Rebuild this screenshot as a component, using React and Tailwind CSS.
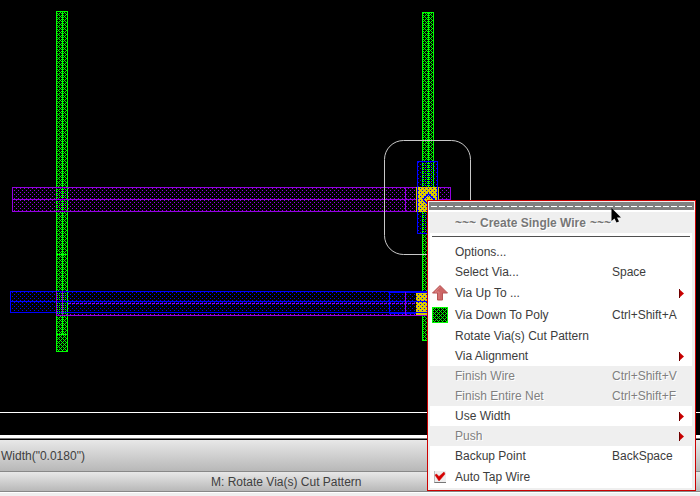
import React from "react";

// Lit columns of each of the four rows in a repeating 4 by 4 cell.
const METAL_CELL = [[0], [], [2], []];
const POLY_CELL = [[0], [1, 3], [2], [1, 3]];

function Stipple({ x, y, w, h, color, cell = METAL_CELL }) {
  let d = "";
  for (let py = y; py < y + h; py += 1) {
    for (let px = x; px < x + w; px += 1) {
      if (cell[py % 4].includes(px % 4)) d += `M${px} ${py}h1v1h-1z`;
    }
  }
  return <path d={d} fill={color} />;
}

function Shape({ x, y, w, h, color, cell }) {
  return (
    <g>
      <Stipple x={x + 1} y={y + 1} w={w - 2} h={h - 2} color={color} cell={cell} />
      <rect x={x + 0.5} y={y + 0.5} width={w - 1} height={h - 1} fill="none" stroke={color} />
    </g>
  );
}

const GREEN = "#00ff00";
const VIOLET = "#9400e0";
const BLUE = "#0000ff";
const YELLOW = "#dccc00";

function Layout() {
  return (
    <svg className="absolute inset-0 h-full w-full" aria-hidden="true">
      <Shape x={56} y={11} w={12} h={341} color={GREEN} cell={POLY_CELL} />
      <Shape x={422} y={12} w={12} h={329} color={GREEN} cell={POLY_CELL} />
      <path d="M62.5 11v323M428.5 12v328M56 254.5h12M56 334.5h12" fill="none" stroke={GREEN} />

      <Shape x={12} y={187} w={439} h={25} color={VIOLET} />
      <path d="M12 199.5h438M405.5 187v25" fill="none" stroke={VIOLET} />
      <Shape x={56} y={291} w={401} h={25} color={VIOLET} />

      <Shape x={10} y={291} w={441} h={22} color={BLUE} />
      <path d="M10 301.5h440M389.5 292v21M10 312.5h440" fill="none" stroke={BLUE} />
      <path d="M389 292h60M389 313h60" fill="none" stroke={BLUE} strokeWidth="2" />
      <path d="M56.5 291v24M62.5 291v24M405.5 292v23" fill="none" stroke={VIOLET} />
      <path d="M68 303.5h380" fill="none" stroke={VIOLET} strokeDasharray="3 1" />
      <Shape x={417} y={161} w={21} h={73} color={BLUE} />

      <path d="M416 187h23v25h-23zM416 293h23v22h-23z" fill={YELLOW} />
      <Stipple x={418} y={188} w={19} h={23} color={BLUE} />
      <Stipple x={416} y={294} w={22} h={18} color={BLUE} />
      <path d="M417.5 187v25M437.5 187v25M416 301.5h20M416 312.5h20" fill="none" stroke={BLUE} />
      <path d="M423 199.5l5.500-5.500 9 9M423 199.5l6 6" fill="none" stroke={BLUE} shapeRendering="crispEdges" />

      <rect x="384.5" y="140.5" width="86" height="114" rx="19" fill="none" stroke="#c8c8c8" />
      <path d="M0 412h4000v1h-4000z" fill="#fff" />
    </svg>
  );
}

function UpArrow() {
  return (
    <svg width="16" height="16" viewBox="0 0 16 16" aria-hidden="true">
      <path d="M8 .5L15.5 8H10.500v7h-5V8H.5z" fill="#cd6666" stroke="#b85454" />
      <path d="M8 2L3 7h4v7" fill="none" stroke="#d98585" />
    </svg>
  );
}

function PolySwatch() {
  return (
    <svg width="16" height="16" viewBox="0 0 16 16" aria-hidden="true">
      <path d="M0 0h16v16H0z" fill="#000" />
      <Shape x={0} y={0} w={16} h={16} color={GREEN} cell={POLY_CELL} />
    </svg>
  );
}

function CheckMark() {
  return (
    <svg className="pointer-events-none absolute inset-0" width="12" height="12" viewBox="0 0 12 12" aria-hidden="true">
      <path d="M1 4l1.500-1 2.500 2.500L10 1l1 2-6 7z" fill="#d40000" stroke="#d40000" strokeWidth=".5" />
    </svg>
  );
}

function SubmenuArrow() {
  return (
    <svg width="5" height="9" viewBox="0 0 5 9" aria-hidden="true">
      <path d="M0 0l5 4.500-5 4.500z" fill="#c80000" />
      <path d="M.5 0v9" stroke="#700000" />
    </svg>
  );
}

function Item({ label, shortcut, icon, submenu, disabled, tall }) {
  return (
    <button
      type="button"
      role="menuitem"
      disabled={disabled}
      className={`flex w-full items-center text-left ${tall ? "h-[22px]" : "h-5"} ${disabled ? "bg-[#efefef] text-[#808080] [text-shadow:1px_1px_0_#fff]" : "bg-white text-[#3c3c3c]"}`}
    >
      <span className="flex w-[25px] shrink-0 pl-[2px]">{icon}</span>
      <span className="flex-1 whitespace-nowrap">{label}</span>
      {shortcut && <span className="w-20 whitespace-nowrap">{shortcut}</span>}
      {submenu && <span className="pr-2"><SubmenuArrow /></span>}
    </button>
  );
}

function ContextMenu() {
  return (
    <div role="menu" aria-label="Create Single Wire" className="absolute top-[200px] left-[427px] w-[269px] border border-[#cc0000] bg-[#efefef] pt-px pb-[2px]">
      <div className="mx-px flex h-2 items-center bg-[#808080] px-[2px]">
        <div className="h-px w-full bg-[repeating-linear-gradient(90deg,#fff_0_6px,#808080_6px_8px)]" />
      </div>
      <div className="h-[2px] bg-white" />
      <div className="flex h-[21px] items-center gap-1 pl-[27px] font-bold whitespace-nowrap text-[#777] [text-shadow:1px_1px_0_#fff]">
        <span>~~~</span>
        <span>Create Single Wire</span>
        <span>~~~</span>
      </div>
      <div className="pr-[3px] pl-[2px]">
        <div className="flex h-[9px] items-start bg-white px-[2px] pt-[3px]">
          <div className="h-px w-full bg-[#505050]" />
        </div>
        <Item label="Options..." />
        <Item label="Select Via..." shortcut="Space" />
        <Item label="Via Up To ..." icon={<UpArrow />} submenu tall />
        <Item label="Via Down To Poly" icon={<PolySwatch />} shortcut="Ctrl+Shift+A" tall />
        <Item label="Rotate Via(s) Cut Pattern" />
        <Item label="Via Alignment" submenu />
        <Item label="Finish Wire" shortcut="Ctrl+Shift+V" disabled />
        <Item label="Finish Entire Net" shortcut="Ctrl+Shift+F" disabled />
        <Item label="Use Width" submenu />
        <Item label="Push" submenu disabled />
        <Item label="Backup Point" shortcut="BackSpace" />
        <label className="flex h-[22px] items-center bg-white text-[#3c3c3c]">
          <span className="flex w-[25px] shrink-0 pl-1">
            <span className="relative h-3 w-3">
              <input type="checkbox" defaultChecked className="block h-3 w-3 appearance-none border-b border-l border-b-[#777] border-l-[#bbb] bg-[#eee]" />
              <CheckMark />
            </span>
          </span>
          <span>Auto Tap Wire</span>
        </label>
      </div>
    </div>
  );
}

function Pointer() {
  return (
    <svg className="absolute top-[207px] left-[611px]" width="11" height="18" viewBox="0 0 11 18" aria-hidden="true">
      <path d="M.5 1v13l3-2.500 2 4 2.500-1-2-4h4z" fill="#000" />
    </svg>
  );
}

export default function App() {
  return (
    <div className="relative flex min-h-screen flex-col overflow-hidden bg-black font-['Liberation_Sans',Arial,sans-serif] text-[12px] leading-4 text-[#404040]">
      <main className="relative flex-1">
        <Layout />
      </main>
      <footer>
        <div className="h-[3px] bg-white" />
        <div className="h-px bg-[#777]" />
        <div className="h-px bg-black" />
        <div className="flex h-8 items-center border-b border-[#888] bg-linear-to-b from-[#e8e8e8] to-[#b8b8b8] pl-px">
          Width("0.0180")
        </div>
        <div className="flex h-5 items-center border-b border-[#888] bg-linear-to-b from-[#e8e8e8] to-[#b8b8b8] pl-[211px]">
          M: Rotate Via(s) Cut Pattern
        </div>
        <div className="h-1 border-t border-white bg-[#efefef]" />
      </footer>
      <ContextMenu />
      <Pointer />
    </div>
  );
}
